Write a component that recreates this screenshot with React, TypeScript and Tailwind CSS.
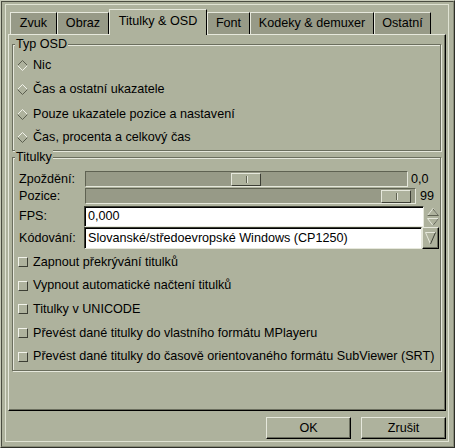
import React from "react";

const BG = "bg-[#aeb29d]";

function Radio({ on }: { on?: boolean }) {
  return (
    <svg width="11" height="11" viewBox="0 0 11 11" className="shrink-0">
      <polygon points="5.5,0.5 10.5,5.5 5.5,10.5 0.5,5.5" fill="#aeb29d" />
      <polyline points="0.5,5.5 5.5,0.5 10.5,5.5" fill="none" stroke={on ? "#5a5d4e" : "#f2f3ea"} strokeWidth="1" />
      <polyline points="0.5,5.5 5.5,10.5 10.5,5.5" fill="none" stroke={on ? "#f2f3ea" : "#5a5d4e"} strokeWidth="1" />
    </svg>
  );
}

function Check() {
  return (
    <div className="w-[10px] h-[10px] shrink-0 border-t border-l border-t-[#f2f3ea] border-l-[#f2f3ea] border-r border-b border-r-[#3c3e34] border-b-[#3c3e34] bg-[#aeb29d]" />
  );
}

function Tab({ label, w, active }: { label: string; w: string; active?: boolean }) {
  if (active) {
    return (
      <div
        className={`${w} h-[26px] -mb-[1px] relative z-10 ${BG} border-t border-l border-t-[#e6e8dc] border-l-[#e6e8dc] border-r border-r-black flex items-center justify-center pb-[2px]`}
      >
        {label}
      </div>
    );
  }
  return (
    <div
      className={`${w} h-[22px] bg-[#979a87] border-t border-l border-t-[#e6e8dc] border-l-[#e6e8dc] border-r border-r-black flex items-center justify-center`}
    >
      {label}
    </div>
  );
}

function Trough({ w, thumbLeft }: { w: string; thumbLeft: string }) {
  return (
    <div className={`${w} h-[16px] bg-[#979a87] border-t border-l border-t-[#5f6252] border-l-[#5f6252] border-r border-b border-r-[#e6e8dc] border-b-[#e6e8dc] flex items-center shrink-0`}>
      <div className={`${thumbLeft} w-[30px] h-[13px] ${BG} border-t border-l border-t-[#e6e8dc] border-l-[#e6e8dc] border-r border-b border-r-[#3c3e34] border-b-[#3c3e34] flex items-center justify-center`}>
        <div className="w-[1px] h-[7px] bg-[#5f6252] shadow-[1px_0_0_#e6e8dc]" />
      </div>
    </div>
  );
}

const checks: [string, string][] = [
  ["Zapnout překrývání titulků", "h-[24px]"],
  ["Vypnout automatické načtení titulků", "h-[23px]"],
  ["Titulky v UNICODE", "h-[24px]"],
  ["Převést dané titulky do vlastního formátu MPlayeru", "h-[24px]"],
  ["Převést dané titulky do časově orientovaného formátu SubViewer (SRT)", "h-[23px]"],
];

export default function App() {
  return (
    <div
      className={`w-[455px] h-[448px] ${BG} text-black text-[12.6px] leading-[15px] font-['Liberation_Sans',_Arial,_sans-serif] border-t border-l border-t-[#c8cbb9] border-l-[#c8cbb9] border-r border-b border-r-[#2e2f28] border-b-[#2e2f28]`}
    >
      <div className="w-full h-full border-t border-l border-t-[#4a4c40] border-l-[#4a4c40] border-r border-b border-r-[#8a8d7a] border-b-[#8a8d7a] pt-[2px] pl-[3px]">
        <div className="w-[444px] h-[438px] border border-[#e0e3d3] pt-[4px] pl-[2px] pr-[1px]">
          {/* Tabs */}
          <div className="flex items-end h-[25px] pl-[2px]">
            <Tab label="Zvuk" w="w-[47px]" />
            <Tab label="Obraz" w="w-[52px]" />
            <Tab label="Titulky & OSD" w="w-[98px]" active />
            <Tab label="Font" w="w-[43px]" />
            <Tab label="Kodeky & demuxer" w="w-[124px]" />
            <Tab label="Ostatní" w="w-[57px]" />
          </div>
          {/* Page */}
          <div className="w-[438px] h-[377px] border-t border-l border-t-[#e6e8dc] border-l-[#e6e8dc] border-r border-b border-r-black border-b-black shadow-[inset_-1px_-1px_0_#6b6e5e] px-[3px] pt-[2px]">
            <fieldset className="border border-[#6b6e5e] shadow-[inset_1px_1px_0_#e6e8dc,1px_1px_0_#e6e8dc] w-[429px] h-[114px] px-0 pt-[1px]">
              <legend className={`ml-[2px] px-[1px] ${BG} leading-[15px]`}>Typ OSD</legend>
              <div className="flex flex-col pl-[4px]">
                <div className="h-[24px] flex items-center gap-[5px]"><Radio on /><span>Nic</span></div>
                <div className="h-[25px] flex items-center gap-[5px]"><Radio /><span>Čas a ostatní ukazatele</span></div>
                <div className="h-[24px] flex items-center gap-[5px]"><Radio /><span>Pouze ukazatele pozice a nastavení</span></div>
                <div className="h-[23px] flex items-center gap-[5px]"><Radio /><span>Čas, procenta a celkový čas</span></div>
              </div>
            </fieldset>
            <fieldset className="-mt-[1px] border border-[#6b6e5e] shadow-[inset_1px_1px_0_#e6e8dc,1px_1px_0_#e6e8dc] w-[429px] h-[221px] px-0 pt-[6px]">
              <legend className={`ml-[2px] px-[1px] ${BG} leading-[15px]`}>Titulky</legend>
              <div className="flex flex-col pl-[6px]">
                <div className="flex items-center h-[16px]">
                  <span className="w-[66px] shrink-0">Zpoždění:</span>
                  <Trough w="w-[323px]" thumbLeft="ml-[145px]" />
                  <span className="ml-[3px]">0,0</span>
                </div>
                <div className="flex items-center h-[16px] mt-[1px]">
                  <span className="w-[66px] shrink-0">Pozice:</span>
                  <Trough w="w-[331px]" thumbLeft="ml-[295px]" />
                  <span className="ml-[4px]">99</span>
                </div>
                <div className="flex items-center h-[21px] mt-[2px]">
                  <span className="w-[65px] shrink-0">FPS:</span>
                  <div className="w-[340px] h-[21px] bg-white border-t border-l border-t-[#3c3e34] border-l-[#3c3e34] border-r border-b border-r-[#e6e8dc] border-b-[#e6e8dc] shadow-[inset_1px_1px_0_#000] flex items-center pl-[3px]">0,000</div>
                  <svg width="14" height="20" viewBox="0 0 14 20" className="ml-[2px]">
                    <polyline points="1.5,8.5 7,1.5 12.5,8.5" fill="none" stroke="#e6e8dc" />
                    <line x1="1.5" y1="8.5" x2="12.5" y2="8.5" stroke="#5f6252" />
                    <line x1="7" y1="2" x2="12.5" y2="8.5" stroke="#5f6252" />
                    <polyline points="1.5,11.5 12.5,11.5" fill="none" stroke="#e6e8dc" />
                    <polyline points="1.5,11.5 7,18.5 12.5,11.5" fill="none" stroke="#e6e8dc" />
                    <line x1="7" y1="18.5" x2="12.5" y2="11.5" stroke="#5f6252" />
                  </svg>
                </div>
                <div className="flex items-center h-[22px]">
                  <span className="w-[65px] shrink-0">Kódování:</span>
                  <div className="w-[338px] h-[22px] bg-white border-t border-l border-t-[#3c3e34] border-l-[#3c3e34] border-r border-b border-r-[#e6e8dc] border-b-[#e6e8dc] shadow-[inset_1px_1px_0_#000] flex items-center pl-[3px] whitespace-nowrap">Slovanské/středoevropské Windows (CP1250)</div>
                  <div className={`w-[17px] h-[22px] ${BG} border-t border-l border-t-[#e6e8dc] border-l-[#e6e8dc] border-r border-b border-r-black border-b-black shadow-[inset_-1px_-1px_0_#6b6e5e] flex items-center justify-center`}>
                    <svg width="11" height="14" viewBox="0 0 11 14">
                      <line x1="0.5" y1="1.5" x2="10.5" y2="1.5" stroke="#e6e8dc" />
                      <line x1="0.5" y1="1.5" x2="5.5" y2="13" stroke="#e6e8dc" />
                      <line x1="10.5" y1="1.5" x2="5.5" y2="13" stroke="#3c3e34" />
                    </svg>
                  </div>
                </div>
              </div>
              <div className="flex flex-col pl-[5px] mt-[1px]">
                {checks.map(([t, h]) => (
                  <div key={t} className={`${h} flex items-center gap-[5px] whitespace-nowrap`}>
                    <Check />
                    <span>{t}</span>
                  </div>
                ))}
              </div>
            </fieldset>
          </div>
          {/* Buttons */}
          <div className="flex justify-end gap-[10px] mt-[6px] w-[438px]">
            {["OK", "Zrušit"].map((b) => (
              <div
                key={b}
                className={`w-[85px] h-[22px] ${BG} border-t border-l border-t-[#e6e8dc] border-l-[#e6e8dc] border-r border-b border-r-black border-b-black shadow-[inset_-1px_-1px_0_#6b6e5e] flex items-center justify-center`}
              >
                {b}
              </div>
            ))}
          </div>
        </div>
      </div>
    </div>
  );
}
